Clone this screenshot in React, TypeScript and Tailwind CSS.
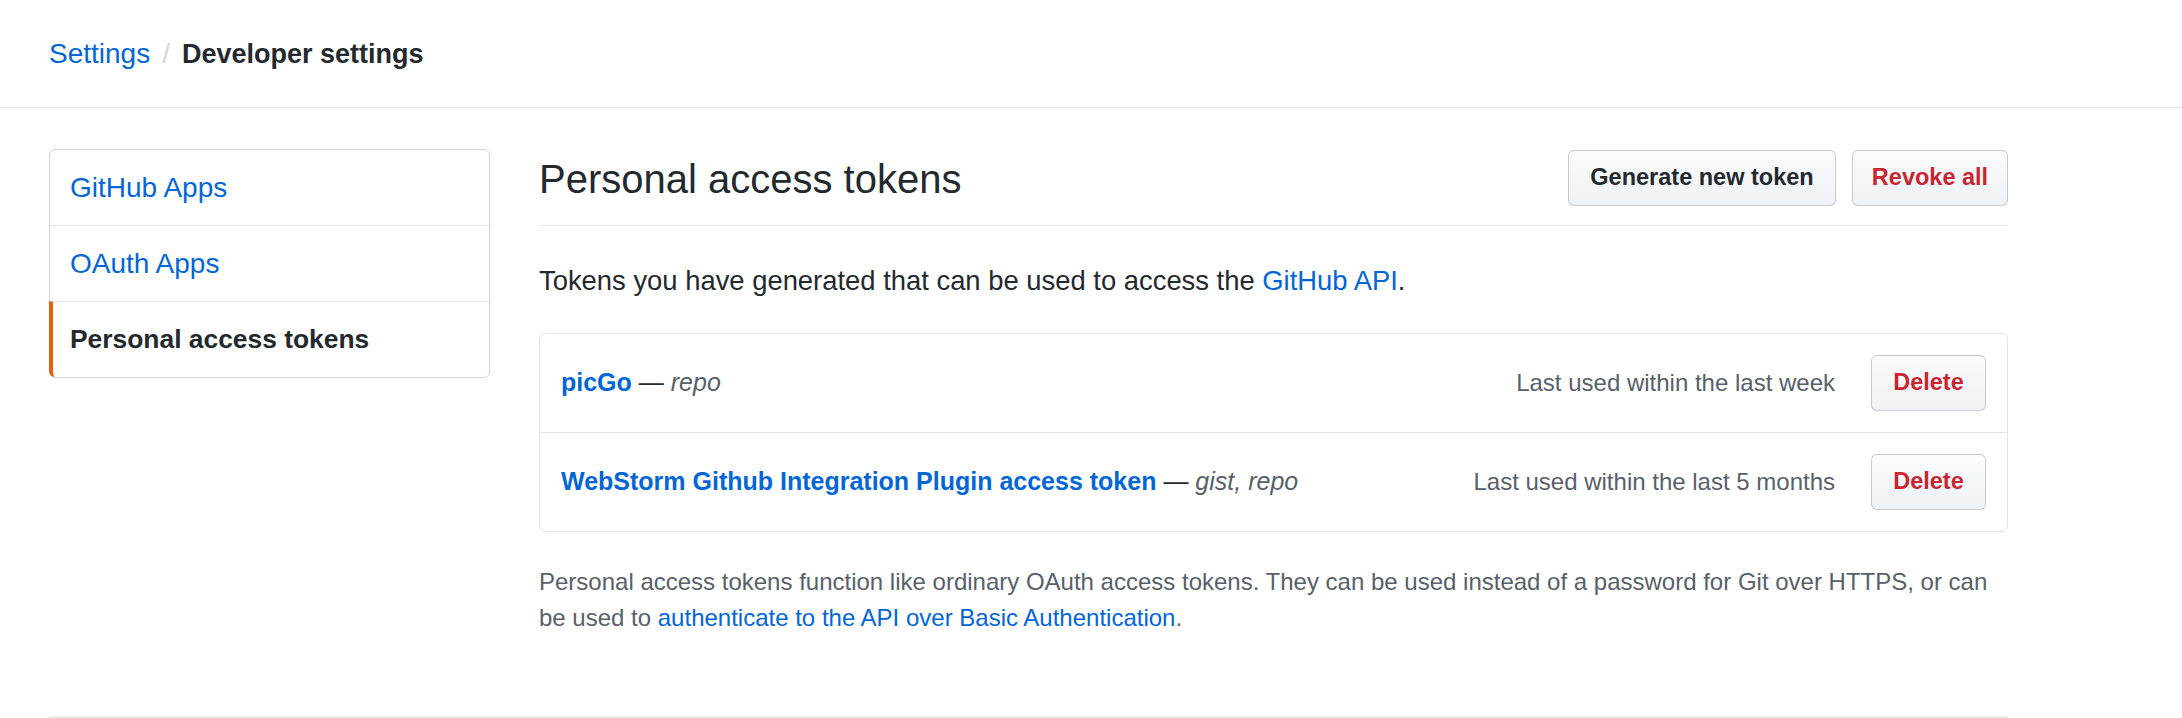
import React from "react";

type Token = {
  name: string;
  scopes: string;
  lastUsed: string;
};

const tokens: Token[] = [
  { name: "picGo", scopes: "repo", lastUsed: "Last used within the last week" },
  {
    name: "WebStorm Github Integration Plugin access token",
    scopes: "gist, repo",
    lastUsed: "Last used within the last 5 months",
  },
];

const menu = [
  { name: "GitHub Apps", selected: false },
  { name: "OAuth Apps", selected: false },
  { name: "Personal access tokens", selected: true },
];

const btn =
  "h-[56px] rounded-[6px] border border-[rgba(27,31,35,0.2)] bg-[linear-gradient(180deg,#fafbfc,#eff3f6_90%)] text-[23.5px] font-bold flex items-center justify-center";

const App: React.FC = () => {
  return (
    <div className="min-h-screen bg-white font-['Liberation_Sans',Arial,sans-serif] text-[#24292e]">
      {/* breadcrumb */}
      <header className="border-b border-[#e1e4e8] pl-[49px] pt-[33px] pb-[32px]">
        <div className="flex items-baseline h-[42px] leading-[42px]">
          <a className="text-[28px] text-[#0366d6] cursor-pointer">Settings</a>
          <span className="text-[28px] text-[#d1d5da] mx-[12px]">/</span>
          <span className="text-[27px] font-bold">Developer settings</span>
        </div>
      </header>

      <div className="flex items-start pl-[49px] mt-[41px]">
        {/* side menu */}
        <nav className="w-[441px] border border-[#d1d5da] rounded-[6px] flex flex-col">
          {menu.map((item, i) => (
            <div
              key={item.name}
              className={`flex items-center ${
                i > 0 ? "h-[76px] border-t border-[#e1e4e8]" : "h-[75px]"
              } ${
                item.selected
                  ? "-ml-px border-l-[4px] border-l-[#e36209] rounded-bl-[6px] pl-[17px] text-[26.4px] font-bold text-[#24292e]"
                  : "pl-[20px] text-[28px] text-[#0366d6] cursor-pointer"
              }`}
            >
              {item.name}
            </div>
          ))}
        </nav>

        {/* content */}
        <main className="ml-[49px] w-[1469px]">
          <div className="flex items-center justify-between pt-[1px] pb-[19px] border-b border-[#e1e4e8]">
            <h2 className="text-[40px] font-normal leading-[56px] h-[56px] pt-[1px]">
              Personal access tokens
            </h2>
            <div className="flex gap-[16px]">
              <button className={`${btn} w-[268px] text-[#24292e]`}>
                Generate new token
              </button>
              <button className={`${btn} w-[156px] text-[#cb2431]`}>
                Revoke all
              </button>
            </div>
          </div>

          <p className="mt-[34px] text-[27.4px] leading-[42px]">
            Tokens you have generated that can be used to access the{" "}
            <a className="text-[#0366d6] cursor-pointer">GitHub API</a>.
          </p>

          <div className="mt-[31px] border border-[#e1e4e8] rounded-[6px]">
            {tokens.map((t, i) => (
              <div
                key={t.name}
                className={`flex items-center pl-[21px] pr-[21px] ${
                  i > 0 ? "h-[99px] border-t border-[#e1e4e8]" : "h-[98px]"
                }`}
              >
                <div className="flex-1 text-[25px] whitespace-nowrap">
                  <a className="font-bold text-[#0366d6] cursor-pointer">{t.name}</a>
                  <span className="text-[#24292e]"> — </span>
                  <em className="text-[#586069]">{t.scopes}</em>
                </div>
                <span className="text-[24px] text-[#586069] mr-[36px] whitespace-nowrap">
                  {t.lastUsed}
                </span>
                <button className={`${btn} w-[115px] h-[54px] text-[#cb2431]`}>
                  Delete
                </button>
              </div>
            ))}
          </div>

          <p className="mt-[32px] text-[24px] leading-[36px] text-[#586069] whitespace-nowrap">
            Personal access tokens function like ordinary OAuth access tokens. They can be
            used instead of a password for Git over HTTPS, or can
            <br />
            be used to{" "}
            <a className="text-[#0366d6] cursor-pointer">
              authenticate to the API over Basic Authentication
            </a>
            .
          </p>
        </main>
      </div>

      <div className="ml-[49px] w-[1959px] mt-[80px] border-t-2 border-[#eaecef]" />
    </div>
  );
};

export default App;
